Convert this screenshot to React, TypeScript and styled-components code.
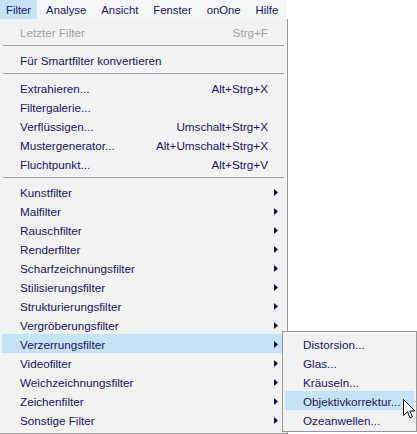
import React from "react";
import styled, { createGlobalStyle } from "styled-components";

const GlobalStyle = createGlobalStyle`
  html, body { margin: 0; padding: 0; background: #ffffff; }
  body { font-family: "Liberation Sans", Arial, sans-serif; font-size: 11.7px; }
`;

const TEXT = "#1b1464";
const HILITE = "#c6e3f6";

const Screen = styled.div`
  position: relative;
  width: 417px;
  height: 434px;
  overflow: hidden;
  background: #ffffff;
`;

const MenuBar = styled.div`
  display: flex;
  gap: 3px;
  width: 287px;
  height: 19px;
  background: #f5f6f7;
  font-size: 11.3px;
`;

const BarItem = styled.div<{ $active?: boolean }>`
  padding: 0 6px;
  line-height: 20px;
  color: ${TEXT};
  background: ${(p) => (p.$active ? HILITE : "transparent")};
`;

const Menu = styled.div`
  box-sizing: border-box;
  width: 288px;
  height: 415px;
  background: #f2f2f2;
  border-right: 1px solid #979797;
  border-bottom: 1px solid #979797;
  padding: 3px 0 3px 0;
  display: flex;
  flex-direction: column;
`;

const SubMenu = styled.div`
  position: absolute;
  left: 282px;
  top: 331px;
  box-sizing: border-box;
  width: 135px;
  background: #f2f2f2;
  border: 1px solid #979797;
  padding: 2px 0;
  display: flex;
  flex-direction: column;
`;

const Row = styled.div<{ $hl?: boolean; $disabled?: boolean }>`
  display: flex;
  align-items: center;
  height: 19px;
  margin: 0 2px;
  padding-left: 18px;
  box-sizing: border-box;
  color: ${(p) => (p.$disabled ? "#a3a3a3" : TEXT)};
  background: ${(p) => (p.$hl ? HILITE : "transparent")};
  white-space: nowrap;
`;

const Label = styled.span`
  flex: 1;
  padding-top: 2px;
`;

const Shortcut = styled.span`
  padding-top: 2px;
`;

const ArrowCell = styled.span`
  width: 17px;
  padding-left: 6px;
  padding-top: 1px;
  box-sizing: border-box;
  display: flex;
  align-items: center;
`;

const Separator = styled.div`
  height: 9px;
  margin: 0 3px;
  display: flex;
  flex-direction: column;
  justify-content: center;
  &::before {
    content: "";
    display: block;
    height: 1px;
    background: #a0a0a0;
  }
`;

const Cursor = styled.svg`
  position: absolute;
  left: 403px;
  top: 399px;
`;

const Arrow = () => (
  <svg width="4" height="7" viewBox="0 0 4 7">
    <path d="M0 0 L4 3.5 L0 7 Z" fill="#10105a" />
  </svg>
);

type Item = { label: string; shortcut?: string; sub?: boolean; hl?: boolean; disabled?: boolean };

const group1: Item[] = [
  { label: "Extrahieren...", shortcut: "Alt+Strg+X" },
  { label: "Filtergalerie..." },
  { label: "Verflüssigen...", shortcut: "Umschalt+Strg+X" },
  { label: "Mustergenerator...", shortcut: "Alt+Umschalt+Strg+X" },
  { label: "Fluchtpunkt...", shortcut: "Alt+Strg+V" },
];

const group2: Item[] = [
  "Kunstfilter",
  "Malfilter",
  "Rauschfilter",
  "Renderfilter",
  "Scharfzeichnungsfilter",
  "Stilisierungsfilter",
  "Strukturierungsfilter",
  "Vergröberungsfilter",
  "Verzerrungsfilter",
  "Videofilter",
  "Weichzeichnungsfilter",
  "Zeichenfilter",
  "Sonstige Filter",
].map((l) => ({ label: l, sub: true, hl: l === "Verzerrungsfilter" }));

const subItems: Item[] = [
  { label: "Distorsion..." },
  { label: "Glas..." },
  { label: "Kräuseln..." },
  { label: "Objektivkorrektur...", hl: true },
  { label: "Ozeanwellen..." },
];

const MenuRow = ({ item }: { item: Item }) => (
  <Row $hl={item.hl} $disabled={item.disabled}>
    <Label>{item.label}</Label>
    {item.shortcut && <Shortcut>{item.shortcut}</Shortcut>}
    <ArrowCell>{item.sub && <Arrow />}</ArrowCell>
  </Row>
);

const SubRow = ({ item }: { item: Item }) => (
  <Row $hl={item.hl}>
    <Label>{item.label}</Label>
  </Row>
);

export default function App() {
  return (
    <Screen>
      <GlobalStyle />
      <MenuBar>
        <BarItem $active>Filter</BarItem>
        <BarItem>Analyse</BarItem>
        <BarItem>Ansicht</BarItem>
        <BarItem>Fenster</BarItem>
        <BarItem>onOne</BarItem>
        <BarItem>Hilfe</BarItem>
      </MenuBar>
      <Menu>
        <MenuRow item={{ label: "Letzter Filter", shortcut: "Strg+F", disabled: true }} />
        <Separator />
        <MenuRow item={{ label: "Für Smartfilter konvertieren" }} />
        <Separator />
        {group1.map((it) => (
          <MenuRow key={it.label} item={it} />
        ))}
        <Separator />
        {group2.map((it) => (
          <MenuRow key={it.label} item={it} />
        ))}
      </Menu>
      <SubMenu>
        {subItems.map((it) => (
          <SubRow key={it.label} item={it} />
        ))}
      </SubMenu>
      <Cursor width="13" height="20" viewBox="0 0 13 20">
        <path
          d="M0.5 0.5 L0.5 16.5 L4.5 12.8 L7 18.7 L9.3 17.7 L6.9 12 L11.8 12 Z"
          fill="#ffffff"
          stroke="#000000"
          strokeWidth="1"
          strokeLinejoin="miter"
        />
      </Cursor>
    </Screen>
  );
}
